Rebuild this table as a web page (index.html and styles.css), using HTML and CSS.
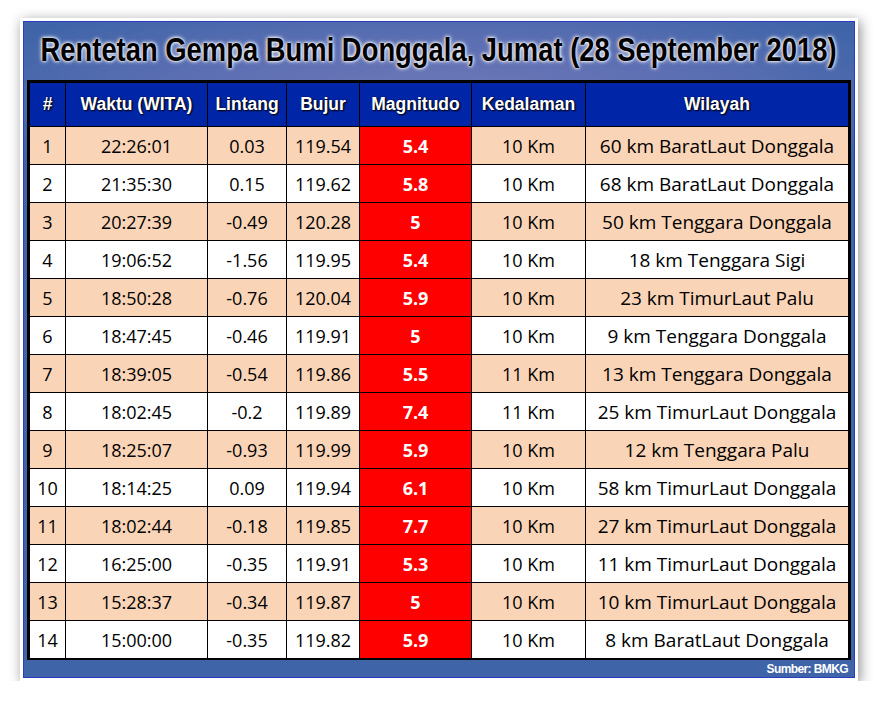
FILE: index.html
```html
<!DOCTYPE html>
<html lang="id">
<head>
<meta charset="utf-8">
<title>Rentetan Gempa Bumi Donggala</title>
<link rel="stylesheet" href="styles.css">
</head>
<body>
<div class="frame">
  <div class="panel">
    <div class="title"><span class="title-text">Rentetan Gempa Bumi Donggala, Jumat (28 September 2018)</span></div>
    <div class="sheet">
      <div class="row head">
        <div>#</div><div>Waktu (WITA)</div><div>Lintang</div><div>Bujur</div><div>Magnitudo</div><div>Kedalaman</div><div>Wilayah</div>
      </div>
      <div class="row odd"><div>1</div><div>22:26:01</div><div>0.03</div><div>119.54</div><div class="mag">5.4</div><div>10 Km</div><div class="area">60 km BaratLaut Donggala</div></div>
      <div class="row"><div>2</div><div>21:35:30</div><div>0.15</div><div>119.62</div><div class="mag">5.8</div><div>10 Km</div><div class="area">68 km BaratLaut Donggala</div></div>
      <div class="row odd"><div>3</div><div>20:27:39</div><div>-0.49</div><div>120.28</div><div class="mag">5</div><div>10 Km</div><div class="area">50 km Tenggara Donggala</div></div>
      <div class="row"><div>4</div><div>19:06:52</div><div>-1.56</div><div>119.95</div><div class="mag">5.4</div><div>10 Km</div><div class="area">18 km Tenggara Sigi</div></div>
      <div class="row odd"><div>5</div><div>18:50:28</div><div>-0.76</div><div>120.04</div><div class="mag">5.9</div><div>10 Km</div><div class="area">23 km TimurLaut Palu</div></div>
      <div class="row"><div>6</div><div>18:47:45</div><div>-0.46</div><div>119.91</div><div class="mag">5</div><div>10 Km</div><div class="area">9 km Tenggara Donggala</div></div>
      <div class="row odd"><div>7</div><div>18:39:05</div><div>-0.54</div><div>119.86</div><div class="mag">5.5</div><div>11 Km</div><div class="area">13 km Tenggara Donggala</div></div>
      <div class="row"><div>8</div><div>18:02:45</div><div>-0.2</div><div>119.89</div><div class="mag">7.4</div><div>11 Km</div><div class="area">25 km TimurLaut Donggala</div></div>
      <div class="row odd"><div>9</div><div>18:25:07</div><div>-0.93</div><div>119.99</div><div class="mag">5.9</div><div>10 Km</div><div class="area">12 km Tenggara Palu</div></div>
      <div class="row"><div>10</div><div>18:14:25</div><div>0.09</div><div>119.94</div><div class="mag">6.1</div><div>10 Km</div><div class="area">58 km TimurLaut Donggala</div></div>
      <div class="row odd"><div>11</div><div>18:02:44</div><div>-0.18</div><div>119.85</div><div class="mag">7.7</div><div>10 Km</div><div class="area">27 km TimurLaut Donggala</div></div>
      <div class="row"><div>12</div><div>16:25:00</div><div>-0.35</div><div>119.91</div><div class="mag">5.3</div><div>10 Km</div><div class="area">11 km TimurLaut Donggala</div></div>
      <div class="row odd"><div>13</div><div>15:28:37</div><div>-0.34</div><div>119.87</div><div class="mag">5</div><div>10 Km</div><div class="area">10 km TimurLaut Donggala</div></div>
      <div class="row"><div>14</div><div>15:00:00</div><div>-0.35</div><div>119.82</div><div class="mag">5.9</div><div>10 Km</div><div class="area">8 km BaratLaut Donggala</div></div>
    </div>
    <div class="source">Sumber: BMKG</div>
  </div>
</div>
</body>
</html>
```

FILE: styles.css
```css
html, body {
  margin: 0;
  padding: 0;
  background: #ffffff;
}

.frame {
  margin: 18px 0 0 20px;
  width: 832px;
  padding: 3px;
  background: #ffffff;
  box-shadow: 2px 3px 12px rgba(0, 0, 0, 0.45);
}

.panel {
  border: 1px solid #2a3cc4;
  padding: 0 3px;
  background: radial-gradient(ellipse 62% 16% at 50% 11%, #6e77b7 0%, #5a6eb2 55%, #3f64a8 100%);
  background-color: #4365a9;
}

.title {
  height: 58px;
  display: flex;
  align-items: center;
  justify-content: center;
  padding-bottom: 3px;
  box-sizing: border-box;
}

.title-text {
  display: inline-block;
  font-family: "Liberation Sans", Arial, sans-serif;
  font-weight: bold;
  font-size: 33px;
  color: #000000;
  white-space: nowrap;
  transform: scaleX(0.83);
  text-shadow: 0 0 2px #ffffff, 0 0 4px #ffffff, 0 0 6px rgba(255, 255, 255, 0.8);
}

.sheet {
  display: grid;
  grid-template-columns: 35px 141px 78px 72px 111px 113px 262px;
  grid-template-rows: 43px repeat(14, 37px);
  gap: 1px;
  background: #000000;
  border: 3px solid #000000;
  border-bottom-width: 2px;
}

.row {
  display: contents;
}

.row > div {
  display: flex;
  align-items: center;
  justify-content: center;
  background: #ffffff;
  font-family: "Open Sans", "Noto Sans", sans-serif;
  font-size: 18px;
  color: #000000;
  white-space: nowrap;
}

.row > div.area {
  font-size: 19px;
}

.row.odd > div {
  background: #fad4b6;
}

.row > div.mag {
  background: #ff0000;
  color: #ffffff;
  font-weight: bold;
}

.row.head > div {
  background: #0026a8;
  color: #ffffff;
  font-family: "Liberation Sans", Arial, sans-serif;
  font-weight: bold;
  font-size: 17.5px;
  text-shadow: 1px 1px 2px #000000, 0 0 2px #001050;
}

.source {
  height: 17px;
  display: flex;
  align-items: center;
  justify-content: flex-end;
  padding-right: 3px;
  font-family: "Liberation Sans", Arial, sans-serif;
  font-weight: bold;
  font-size: 12px;
  letter-spacing: -0.6px;
  color: #ffffff;
}
```
